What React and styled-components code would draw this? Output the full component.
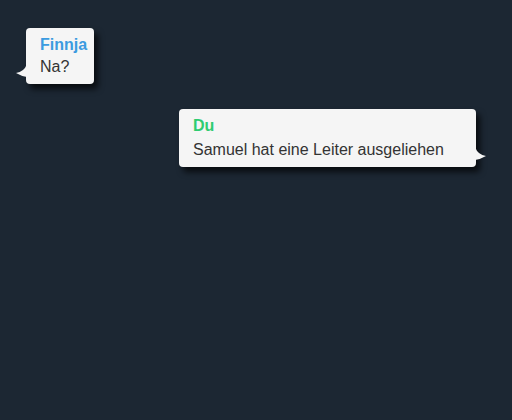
import React from "react";
import styled, { createGlobalStyle } from "styled-components";

const Global = createGlobalStyle`
  html, body { margin: 0; padding: 0; background: #1c2733; }
  * { box-sizing: border-box; }
`;

const Chat = styled.div`
  width: 512px;
  height: 420px;
  background: #1c2733;
  padding: 28px 36px 0 26px;
  display: flex;
  flex-direction: column;
  gap: 25px;
  font-family: "Liberation Sans", Arial, sans-serif;
  font-size: 16px;
`;

const Bubble = styled.div`
  position: relative;
  align-self: ${(p) => (p.$mine ? "flex-end" : "flex-start")};
  width: ${(p) => p.$width}px;
  background: #f5f5f5;
  border-radius: 4px;
  padding: 6px 14px;
  box-shadow: 4px 5px 6px rgba(0, 0, 0, 0.7);
  color: #333;
  line-height: 22px;
`;

const Name = styled.div`
  font-weight: bold;
  color: ${(p) => p.$color};
  margin-bottom: ${(p) => p.$gap || 0}px;
`;

const Text = styled.div`
  white-space: nowrap;
`;

const TailSvg = styled.svg`
  position: absolute;
  bottom: 6px;
  ${(p) => (p.$right ? "right: -11px;" : "left: -11px;")}
  width: 12px;
  height: 14px;
  display: block;
`;

function Tail({ right }) {
  return (
    <TailSvg $right={right} viewBox="0 0 12 14">
      {right ? (
        <path d="M0 0 Q3 8 11 9 Q6 12 0 13 Z" fill="#f5f5f5" />
      ) : (
        <path d="M12 0 Q9 8 1 9 Q6 12 12 13 Z" fill="#f5f5f5" />
      )}
    </TailSvg>
  );
}

export default function App() {
  return (
    <>
      <Global />
      <Chat>
        <Bubble $width={68}>
          <Name $color="#3b9be0">Finnja</Name>
          <Text>Na?</Text>
          <Tail />
        </Bubble>
        <Bubble $mine $width={297}>
          <Name $color="#2ecc71" $gap={2}>Du</Name>
          <Text>Samuel hat eine Leiter ausgeliehen</Text>
          <Tail right />
        </Bubble>
      </Chat>
    </>
  );
}
